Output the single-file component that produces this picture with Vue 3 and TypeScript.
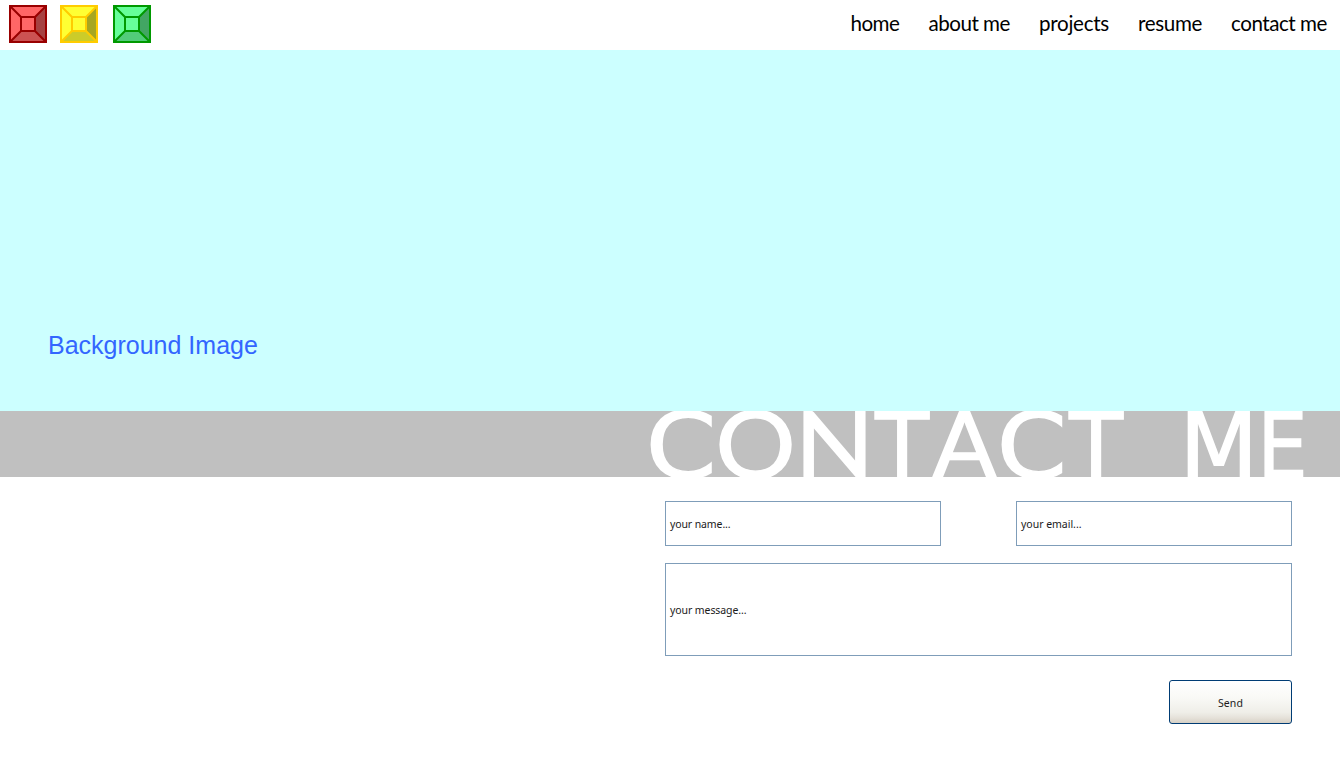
<script setup lang="ts">
interface Gem { name: string; edge: string; face: string; right: string; bottom: string }
interface Glyph { char: string; left: number; width: number; wide?: boolean }

const gems: Gem[] = [
  { name: 'red', edge: '#990000', face: '#ff6666', right: '#a64242', bottom: '#cc5252' },
  { name: 'yellow', edge: '#ffcc00', face: '#ffff33', right: '#a6a621', bottom: '#cccc29' },
  { name: 'green', edge: '#009900', face: '#66ff99', right: '#42a663', bottom: '#52cc7a' },
]

const ctx = document.createElement('canvas').getContext('2d')!

// Letter spacing that makes a label occupy the given advance width.
function tracking(text: string, font: string, width: number): { letterSpacing: string } {
  ctx.font = font
  return { letterSpacing: `${(width - ctx.measureText(text).width) / text.length}px` }
}

const navFont = '20.6px Lato'
const nav = [
  { label: 'home', width: 49 },
  { label: 'about me', width: 81.5 },
  { label: 'projects', width: 70 },
  { label: 'resume', width: 64 },
  { label: 'contact me', width: 96 },
].map((item) => ({ ...item, style: tracking(item.label, navFont, item.width) }))

const smallFont = '10.5px "Noto Sans"'
const nameStyle = tracking('your name...', smallFont, 60.5)
const emailStyle = tracking('your email...', smallFont, 60.5)
const messageStyle = tracking('your message...', smallFont, 76.5)
const sendStyle = tracking('Send', smallFont, 25)

const title: Glyph[] = [
  { char: 'C', left: 650.5, width: 61.5, wide: true },
  { char: 'O', left: 719, width: 73.5 },
  { char: 'N', left: 803, width: 63 },
  { char: 'T', left: 873.7, width: 56.5, wide: true },
  { char: 'A', left: 931.5, width: 66 },
  { char: 'C', left: 1001.5, width: 61, wide: true },
  { char: 'T', left: 1067.7, width: 56.5, wide: true },
  { char: 'M', left: 1186.7, width: 63.5, wide: true },
  { char: 'E', left: 1263.5, width: 40, wide: true },
]
const letters = title.map((g) => {
  ctx.font = g.wide ? '91px "DejaVu Sans"' : '93px Lato'
  const m = ctx.measureText(g.char)
  const scale = (g.width - 1.4) / (m.actualBoundingBoxRight + m.actualBoundingBoxLeft)
  const x = g.left + 0.7 + m.actualBoundingBoxLeft * scale
  return { char: g.char, wide: g.wide, transform: `translate(${x} 66.7) scale(${scale} 1)` }
})
</script>

<template>
  <div class="page">
    <header class="bar">
      <div class="gems">
        <svg v-for="g in gems" :key="g.name" :class="['gem', g.name]" width="38" height="38" viewBox="0 0 38 38">
          <path d="M1 1H37V37H1Z" :fill="g.face" />
          <path d="M37 1V37L26 26V12Z" :fill="g.right" />
          <path d="M1 37H37L26 26H12Z" :fill="g.bottom" />
          <path d="M1 1H37V37H1ZM12 12H26V26H12ZM1 1L12 12M37 1L26 12M37 37L26 26M1 37L12 26" fill="none" :stroke="g.edge" stroke-width="2" />
        </svg>
      </div>
      <nav class="nav">
        <a v-for="item in nav" :key="item.label" :style="item.style">{{ item.label }}</a>
      </nav>
    </header>
    <section class="hero"><span>Background Image</span></section>
    <h1 class="banner" aria-label="CONTACT ME">
      <svg width="1340" height="66" viewBox="0 0 1340 66">
        <text v-for="(l, i) in letters" :key="i" :class="{ wide: l.wide }" :transform="l.transform">{{ l.char }}</text>
      </svg>
    </h1>
    <form class="form" @submit.prevent>
      <div class="row">
        <div class="field"><span :style="nameStyle">your name...</span></div>
        <div class="field"><span :style="emailStyle">your email...</span></div>
      </div>
      <div class="field message"><span :style="messageStyle">your message...</span></div>
      <button class="send" type="submit"><span :style="sendStyle">Send</span></button>
    </form>
  </div>
</template>

<style scoped>
.page { width: 1340px; height: 763px; overflow: hidden; background: #fff; }
.bar { height: 50px; display: flex; justify-content: space-between; box-sizing: border-box; padding: 5px 13px 0 9px; }
.gems { display: flex; }
.gem { display: block; }
.yellow { margin-left: 13px; }
.green { margin-left: 15px; }
.nav { display: flex; gap: 29px; font: 20.6px/37px Lato, sans-serif; color: #000; white-space: nowrap; }
.hero { position: relative; z-index: 1; height: 361px; box-sizing: border-box; padding: 280px 0 0 48px; background: #ccffff; color: #3366ff; font: 25px/30px "Liberation Sans", Arial, sans-serif; }
.banner { margin: 0; height: 66px; background: #c0c0c0; }
.banner svg { display: block; overflow: visible; }
.banner text { font: 93px Lato, sans-serif; fill: #fff; stroke: #fff; stroke-width: 1.4px; }
.banner text.wide { font: 91px "DejaVu Sans", sans-serif; }
.form { margin: 24px 48px 0 665px; display: flex; flex-direction: column; font: 10.5px/16px "Noto Sans", sans-serif; color: #1a1a1a; }
.row { display: flex; justify-content: space-between; }
.field { width: 276px; height: 45px; box-sizing: border-box; border: 1px solid #7f9db9; display: flex; align-items: center; padding: 0 4px; background: #fff; white-space: nowrap; }
.message { width: 627px; height: 93px; margin-top: 17px; }
.send { align-self: flex-end; width: 123px; height: 44px; margin: 24px 0 0; padding: 2px 0 0; border: 1px solid #003c74; border-radius: 3px; background: linear-gradient(#fff 0%, #f9f9f6 40%, #efeee8 75%, #e5e1d9 88%, #d6d0c5 100%); font: inherit; color: #1a1a1a; }
</style>

<style>
body { margin: 0; }
</style>
